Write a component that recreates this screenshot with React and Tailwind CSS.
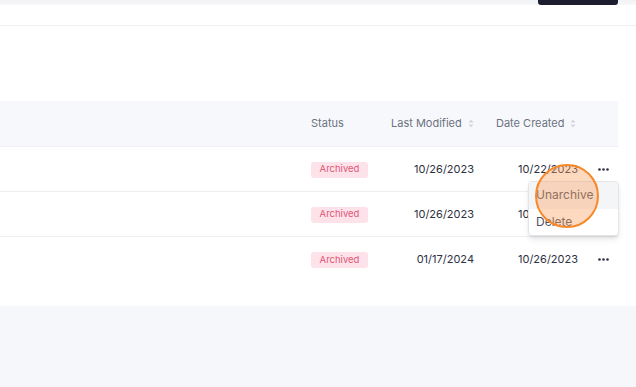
import React from "react";

const rows = [
  { status: "Archived", modified: "10/26/2023", created: "10/22/2023", open: true },
  { status: "Archived", modified: "10/26/2023", created: "10/26/2023" },
  { status: "Archived", modified: "01/17/2024", created: "10/26/2023" },
];

const SortIcon = () => (
  <svg width="6" height="9" viewBox="0 0 6 9" className="ml-[6px] text-gray-300">
    <path d="M3 0.5 L5.5 3.5 H0.5 Z" fill="currentColor" />
    <path d="M3 8.5 L5.5 5.5 H0.5 Z" fill="currentColor" />
  </svg>
);

const Dots = () => (
  <svg width="11" height="3" viewBox="0 0 11 3" className="text-[#2d3142]">
    <circle cx="1.5" cy="1.5" r="1.3" fill="currentColor" />
    <circle cx="5.5" cy="1.5" r="1.3" fill="currentColor" />
    <circle cx="9.5" cy="1.5" r="1.3" fill="currentColor" />
  </svg>
);

const App = () => {
  return (
    <div
      className="w-[636px] h-[387px] overflow-hidden bg-[#f6f7fb] flex flex-col"
      style={{ fontFamily: "Inter, 'Noto Sans', sans-serif" }}
    >
      {/* top bar, scrolled up */}
      <div className="h-[5px] bg-gradient-to-b from-[#f1f2f4] to-[#f8f8f9] flex justify-end">
        <div className="w-[80px] h-[5px] bg-[#1c1d2e] rounded-b-[3px] mr-[18px]" />
      </div>
      <div className="h-[21px] bg-white border-b border-[#eef0f2]" />

      <div className="bg-white pt-[75px] pb-[24px]">
        <div className="w-[618px] text-[11px] text-[#6b7280]">
          <div className="flex items-center h-[46px] bg-[#f7f8fc] border-b border-[#eef0f4]">
            <div className="w-[311px]" />
            <div className="w-[80px]">Status</div>
            <div className="w-[105px] flex items-center">
              Last Modified
              <SortIcon />
            </div>
            <div className="w-[94px] flex items-center">
              Date Created
              <SortIcon />
            </div>
          </div>

          {rows.map((row, i) => (
            <div
              key={i}
              className={
                "flex items-center h-[45px] " +
                (i < rows.length - 1 ? "border-b border-[#eceef1]" : "")
              }
            >
              <div className="w-[311px]" />
              <div className="w-[80px]">
                <span className="inline-flex items-center justify-center w-[57px] h-[16px] rounded-[3px] bg-[#fde3e9] text-[#e05679] text-[9.5px]">
                  {row.status}
                </span>
              </div>
              <div className="w-[105px] pr-[22px] text-right text-[11px] text-[#2d3142]">
                {row.modified}
              </div>
              <div className="w-[94px] pr-[12px] text-right text-[11px] text-[#2d3142]">
                {row.created}
              </div>
              <div className="relative w-[28px] flex items-center pl-[8px]">
                <Dots />
                {row.open && (
                  <div className="absolute left-[-62px] top-[13px] w-[91px] bg-white border border-[#e3e5e9] rounded-[4px] shadow-md text-[12px] text-[#4b5060] z-10">
                    <div className="h-[27px] flex items-center pl-[7px] bg-[#f4f5f7] rounded-t-[4px]">
                      Unarchive
                    </div>
                    <div className="h-[26px] flex items-center pl-[7px]">Delete</div>
                    <div className="absolute left-[6px] top-[-18px] w-[64px] h-[64px] rounded-full border-2 border-[#f7892a] bg-[#f9a15e]/40" />
                  </div>
                )}
              </div>
            </div>
          ))}
        </div>
      </div>
    </div>
  );
};

export default App;
